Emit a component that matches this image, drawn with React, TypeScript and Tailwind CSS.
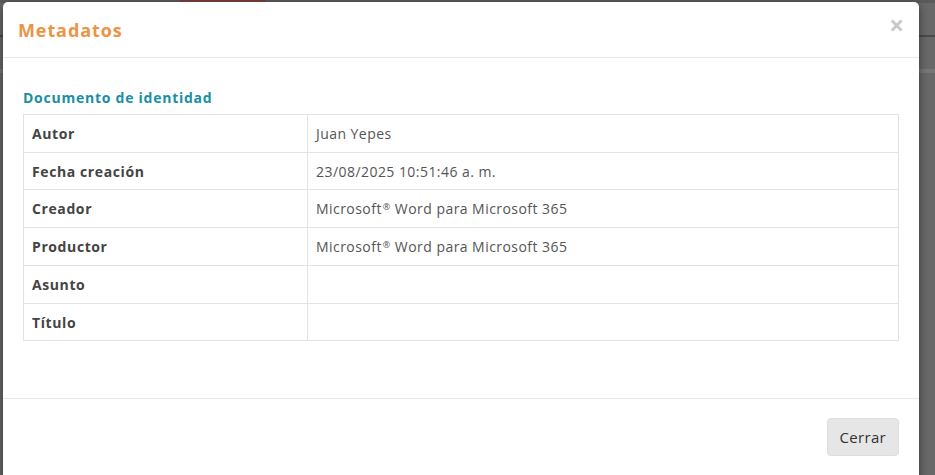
import type { ReactNode } from 'react';

const reg = (
  <>
    Microsoft<span className="text-[9px] leading-none relative top-[-4px] ml-[1px]">®</span> Word para Microsoft 365
  </>
);

const rows: { label: string; value: ReactNode }[] = [
  { label: 'Autor', value: 'Juan Yepes' },
  { label: 'Fecha creación', value: '23/08/2025 10:51:46 a. m.' },
  { label: 'Creador', value: reg },
  { label: 'Productor', value: reg },
  { label: 'Asunto', value: '' },
  { label: 'Título', value: '' },
];

function MetadataModal() {
  return (
    <div className="absolute left-[3px] top-[2px] w-[916px] h-[490px] bg-white rounded-[5px] flex flex-col overflow-hidden shadow-[0_3px_9px_rgba(0,0,0,0.5)]">
      {/* Header */}
      <div className="flex items-center justify-between h-[56px] pl-[15px] pr-[15px] border-b border-[#e9e9e9]">
        <h4 className="text-[18px] font-bold text-[#ec9446] leading-[27px] tracking-[0.9px] mt-[2px]">Metadatos</h4>
        <button className="text-[26px] font-bold leading-none text-[#c9c9c9] -mt-[10px]">×</button>
      </div>

      {/* Body */}
      <div className="px-[20px] pt-[29px] pb-[57px] border-b border-[#e9e9e9]">
        <h5 className="text-[14px] font-bold text-[#1b8fa1] leading-[21px] tracking-[0.75px] mb-[6px]">
          Documento de identidad
        </h5>
        <table className="w-full border-collapse text-[14px] leading-[20.7px]">
          <tbody>
            {rows.map((r) => (
              <tr key={r.label}>
                <td className="w-[284px] border border-[#e3e3e3] px-[8px] pt-[9px] pb-[7px] font-bold text-[#444] tracking-[0.6px]">
                  {r.label}
                </td>
                <td className="border border-[#e3e3e3] px-[8px] pt-[9px] pb-[7px] text-[#555] tracking-[0.45px]">
                  {r.value}
                </td>
              </tr>
            ))}
          </tbody>
        </table>
      </div>

      {/* Footer */}
      <div className="flex justify-end px-[20px] pt-[19px]">
        <button className="h-[38px] px-[12px] rounded-[4px] bg-[#e6e6e6] border border-[#dedede] text-[15px] text-[#333] tracking-[0.3px]">
          Cerrar
        </button>
      </div>
    </div>
  );
}

export default function App() {
  return (
    <div
      className="relative w-[935px] h-[475px] overflow-hidden bg-[#686868]"
      style={{ fontFamily: '"Open Sans", "DejaVu Sans", sans-serif' }}
    >
      {/* dimmed page behind the dialog */}
      <div className="flex flex-col">
        <div className="flex h-[3px] bg-[#5a5a5a]">
          <span className="ml-[180px] w-[85px] bg-[#7a3c3a]" />
        </div>
        <div className="h-[32px]" />
        <div className="h-[2px] bg-[#4a4a4a]" />
        <div className="h-[32px]" />
        <div className="h-[4px] bg-[#777]" />
      </div>
      <MetadataModal />
    </div>
  );
}
